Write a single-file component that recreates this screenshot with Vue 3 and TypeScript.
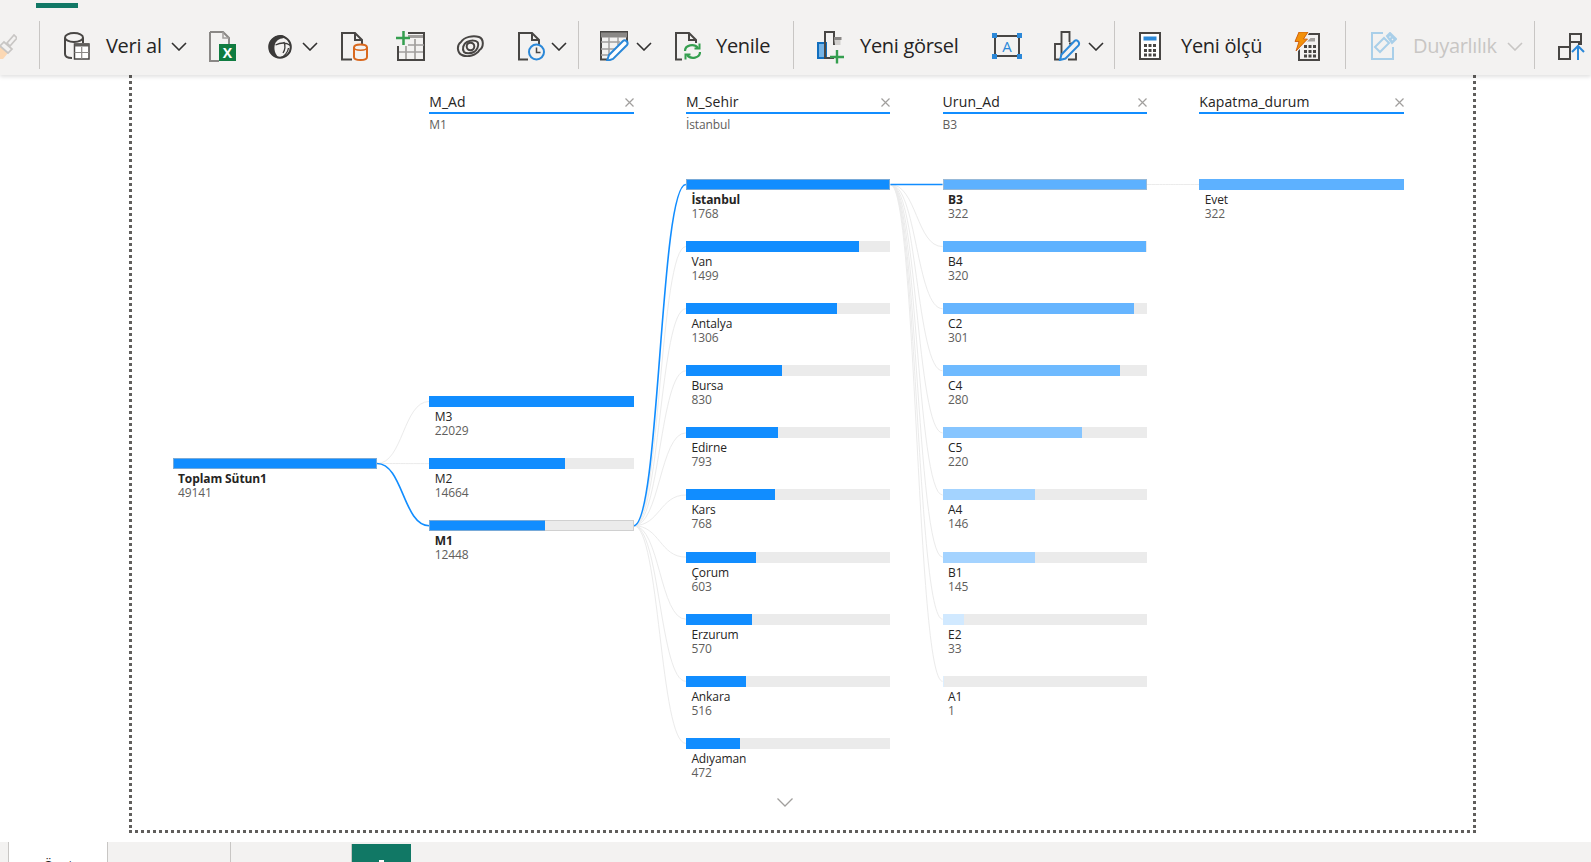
<script setup lang="ts">
interface Item { label: string; value: number }
interface Col { title: string; sub: string; offset: number; tinted: boolean; sel: string; items: Item[] }

const cols: Col[] = [
  { title: '', sub: '', offset: 279, tinted: false, sel: 'Toplam Sütun1', items: [{ label: 'Toplam Sütun1', value: 49141 }] },
  { title: 'M_Ad', sub: 'M1', offset: 217, tinted: false, sel: 'M1', items: [
    { label: 'M3', value: 22029 }, { label: 'M2', value: 14664 }, { label: 'M1', value: 12448 } ] },
  { title: 'M_Sehir', sub: 'İstanbul', offset: 0, tinted: false, sel: 'İstanbul', items: [
    { label: 'İstanbul', value: 1768 }, { label: 'Van', value: 1499 }, { label: 'Antalya', value: 1306 },
    { label: 'Bursa', value: 830 }, { label: 'Edirne', value: 793 }, { label: 'Kars', value: 768 },
    { label: 'Çorum', value: 603 }, { label: 'Erzurum', value: 570 }, { label: 'Ankara', value: 516 },
    { label: 'Adıyaman', value: 472 } ] },
  { title: 'Urun_Ad', sub: 'B3', offset: 0, tinted: true, sel: 'B3', items: [
    { label: 'B3', value: 322 }, { label: 'B4', value: 320 }, { label: 'C2', value: 301 },
    { label: 'C4', value: 280 }, { label: 'C5', value: 220 }, { label: 'A4', value: 146 },
    { label: 'B1', value: 145 }, { label: 'E2', value: 33 }, { label: 'A1', value: 1 } ] },
  { title: 'Kapatma_durum', sub: '', offset: 0, tinted: true, sel: '', items: [{ label: 'Evet', value: 322 }] },
]

const COL_W = 204.5
const COL_GAP = 52.2
const ROW_H = 62.1
const HEAD_H = 104
const PAD_L = 43.5

function maxOf(c: Col): number {
  return Math.max(...c.items.map((i) => i.value))
}
function fillStyle(c: Col, it: Item) {
  const r = it.value / maxOf(c)
  const a = c.tinted ? 0.14 + 0.54 * r : 1
  const red = Math.round(255 - 238 * a)
  const green = Math.round(255 - 114 * a)
  return { width: `${r * 100}%`, background: `rgb(${red},${green},255)` }
}
function barY(ci: number, k: number): number {
  return HEAD_H + cols[ci].offset + ROW_H * k + 5.5
}
function link(ci: number, a: number, b: number): string {
  const x0 = PAD_L + ci * (COL_W + COL_GAP) + COL_W
  const x1 = x0 + COL_GAP
  const xm = (x0 + x1) / 2
  const y0 = barY(ci, a)
  const y1 = barY(ci + 1, b)
  return `M${x0} ${y0}C${xm} ${y0} ${xm} ${y1} ${x1} ${y1}`
}
const grey: string[] = []
const blue: string[] = []
cols.forEach((c, ci) => {
  if (ci === cols.length - 1) return
  const from = c.items.findIndex((i) => i.label === c.sel)
  cols[ci + 1].items.forEach((it, k) => {
    if (it.label === cols[ci + 1].sel) blue.push(link(ci, from, k))
    else grey.push(link(ci, from, k))
  })
})
</script>

<template>
  <div class="page">
    <header class="ribbon">
      <div class="tabline"><span class="tabmark"></span></div>
      <div class="tools">
        <svg class="ic brush" width="17" height="25" viewBox="0 0 17 25"><path d="M-6 19l6-7 8 7-5 6H-6z" fill="#fbd8b4"/><path d="M0 12l4-4 8 7-4 4zM7 9l7-8 3 3-7 8z" fill="#f3f2f1" stroke="#c8c6c4" stroke-width="1.700"/></svg>
        <span class="sep s1"></span>
        <svg class="ic m24" width="26" height="28" viewBox="0 0 26 28" fill="none" stroke="#484644" stroke-width="2"><ellipse cx="10" cy="5.5" rx="9" ry="4.5"/><path d="M1 6v16c0 2.500 2.500 4 7 4M19 6v5"/><rect x="10.500" y="12" width="14.500" height="15" fill="#fff" stroke-width="1.500"/><path d="M10.500 13h14.500" stroke="#605e5c" stroke-width="3"/><path d="M17.700 15v12M10.500 20.500h14.500" stroke="#8a8886" stroke-width="1.200"/></svg>
        <span class="txt t-veri">Veri al</span>
        <svg class="chev c10" width="16" height="9" viewBox="0 0 16 9"><path d="M1 1l7 7 7-7" fill="none" stroke="#323130" stroke-width="1.600"/></svg>
        <svg class="ic m23" width="27" height="31" viewBox="0 0 27 31"><path d="M1 1h13l6 6v6M1 1v29h9" fill="none" stroke="#8a8886" stroke-width="2"/><path d="M14 1v6h6" fill="none" stroke="#a19f9d" stroke-width="1.500"/><rect x="10" y="13" width="17" height="17" fill="#107c41"/><text x="18.500" y="27" text-anchor="middle" class="xl">X</text></svg>
        <svg class="ic m23b" width="24" height="25" viewBox="0 0 24 25" fill="none"><circle cx="12" cy="13" r="10.800" stroke="#3b3a39" stroke-width="2"/><path d="M1.500 13C1.500 6 6 2 12 1c3-.5 5 1 5.500 3-5 0-9 2-10.500 6-1.500 5 0 10 4 14C5 23 1.500 19 1.500 13z" fill="#3b3a39"/><path d="M7.500 11c5-2.500 11-2.500 15 .5M13 23.500c3-1 7-5 7.500-9.500M16 8c1.500 4 1 8-1 11" stroke="#3b3a39" stroke-width="1.300"/></svg>
        <svg class="chev c10" width="16" height="9" viewBox="0 0 16 9"><path d="M1 1l7 7 7-7" fill="none" stroke="#323130" stroke-width="1.600"/></svg>
        <svg class="ic m24" width="27" height="29" viewBox="0 0 27 29" fill="none"><path d="M11 27.500H1V1h13l7 7v5M14 1v7h7" stroke="#484644" stroke-width="2"/><path d="M13 15.500c0-4 13-4 13 0v9.500c0 4-13 4-13 0z" stroke="#d9681d" stroke-width="2" fill="#f3f2f1"/><path d="M13 15.500c0 3.500 13 3.500 13 0" stroke="#d9681d" stroke-width="1.500"/></svg>
        <svg class="ic m28" width="29" height="30" viewBox="0 0 29 30" fill="none"><path d="M12 2h16v27H2V15" stroke="#484644" stroke-width="2"/><path d="M12 5.500h15" stroke="#a19f9d" stroke-width="3"/><path d="M3 21h24M10 15v13M19 8v20M12 14h16" stroke="#a19f9d" stroke-width="1.700"/><path d="M7.500 0v14M0 7h14" stroke="#359f4f" stroke-width="2.500"/></svg>
        <svg class="ic m31" width="28" height="22" viewBox="0 0 28 22" fill="none" stroke="#484644" stroke-width="2"><path d="M6 20C1 18 .5 10 5 7c3-5 12-7 18-5 5 2 5 10 .5 13-3 5-12 8-17.500 5z"/><path d="M8 17c-2-3-1-8 3-10 4-2 10-2 11 1 1 3-1 7-4 9-3 1.500-8 2-10 0z"/><circle cx="14.500" cy="11.500" r="3.800"/></svg>
        <svg class="ic m34" width="27" height="29" viewBox="0 0 27 29" fill="none"><path d="M10 27.500H1V1h13l7 7v6M14 1v7h7" stroke="#484644" stroke-width="2"/><circle cx="18.500" cy="20" r="7.500" stroke="#2b88d8" stroke-width="2" fill="#f3f2f1"/><path d="M18.500 15.500V20.500H22.500" stroke="#484644" stroke-width="1.500"/></svg>
        <svg class="chev c6" width="16" height="9" viewBox="0 0 16 9"><path d="M1 1l7 7 7-7" fill="none" stroke="#323130" stroke-width="1.600"/></svg>
        <span class="sep s12"></span>
        <svg class="ic m21" width="29" height="30" viewBox="0 0 29 30" fill="none"><path d="M10 28.500H1V1h26v10" stroke="#484644" stroke-width="2"/><path d="M1 4h26" stroke="#8a8886" stroke-width="5"/><path d="M1 11h19M1 18h14M1 24h9M9 6v22M18 6v8" stroke="#a19f9d" stroke-width="1.500"/><path d="M9 24L23 10c2-2 6 1 4 4L13 28l-6 2z" fill="#fff" stroke="#2b88d8" stroke-width="2"/></svg>
        <svg class="chev c7" width="16" height="9" viewBox="0 0 16 9"><path d="M1 1l7 7 7-7" fill="none" stroke="#323130" stroke-width="1.600"/></svg>
        <svg class="ic m24" width="26" height="29" viewBox="0 0 26 29" fill="none"><path d="M7 27.500H1V1h13l7 7v3M14 1v7h7" stroke="#484644" stroke-width="2"/><path d="M10 19c0-6 9-8 13-3M25 20c0 6-9 8-13 3" stroke="#359f4f" stroke-width="2.200"/><path d="M19.500 16.500h5v-5M15.500 22.500h-5v5" stroke="#359f4f" stroke-width="2"/></svg>
        <span class="txt t-yenile">Yenile</span>
        <span class="sep s24"></span>
        <svg class="ic m23 lowered" width="28" height="33" viewBox="0 0 28 33" fill="none"><rect x="1" y="12" width="8" height="15" fill="#75b3e6" stroke="#106ebe" stroke-width="2"/><path d="M17 27H8V1h9v13" stroke="#484644" stroke-width="2"/><path d="M17 7h6.500v7H18z" fill="#d2d0ce"/><path d="M17 7.500h7.500" stroke="#8a8886" stroke-width="3"/><path d="M20 19v13.500M13 26h14" stroke="#359f4f" stroke-width="2.400"/></svg>
        <span class="txt t-gorsel">Yeni görsel</span>
        <svg class="ic m33" width="30" height="26" viewBox="0 0 30 26" fill="none"><rect x="3" y="3" width="24" height="20" stroke="#484644" stroke-width="2"/><path d="M0 0h5v5H0zM25 0h5v5h-5zM0 21h5v5H0zM25 21h5v5h-5z" fill="#2b88d8"/><text x="15" y="18.500" text-anchor="middle" class="boxa">A</text></svg>
        <svg class="ic m32" width="27" height="30" viewBox="0 0 27 30" fill="none"><path d="M6 28.500H1V13h6.500M7.500 14V1h8v10M15 12.500h7v1.500M14 28.500h8V22M7.500 13v13" stroke="#484644" stroke-width="1.900"/><path d="M6 29l1.500-5.500L20.500 10c2-2 6 1 4 4.500L11.500 27.500z" fill="#f3f2f1" stroke="#2b88d8" stroke-width="2"/></svg>
        <svg class="chev c7" width="16" height="9" viewBox="0 0 16 9"><path d="M1 1l7 7 7-7" fill="none" stroke="#323130" stroke-width="1.600"/></svg>
        <span class="sep s11"></span>
        <svg class="ic m24" width="22" height="28" viewBox="0 0 22 28"><rect x="1" y="1" width="20" height="26" fill="#fff" stroke="#484644" stroke-width="2"/><rect x="4.500" y="4.500" width="13" height="4" fill="#2b88d8"/><path d="M5 12h3v3H5zM9.500 12h3v3h-3zM14 12h3v3h-3zM5 17h3v3H5zM9.500 17h3v3h-3zM14 17h3v3h-3zM5 21.500h3v3H5zM9.500 21.500h3v3h-3zM14 21.500h3v3h-3z" fill="#484644"/></svg>
        <span class="txt t-olcu">Yeni ölçü</span>
        <svg class="ic m32" width="26" height="29" viewBox="0 0 26 29"><rect x="5" y="2" width="20" height="26" fill="#f3f2f1" stroke="#484644" stroke-width="2"/><rect x="12" y="6" width="9" height="3.500" fill="#a19f9d"/><path d="M10 13h3v3h-3zM14.500 13h3v3h-3zM19 13h3v3h-3zM10 18h3v3h-3zM14.500 18h3v3h-3zM19 18h3v3h-3zM10 22.500h3v3h-3zM14.500 22.500h3v3h-3zM19 22.500h3v3h-3z" fill="#484644"/><path d="M5 0h9L9.500 7H13.500L2 19l3-9.500H1z" fill="#f2910a" stroke="#f3f2f1" stroke-width="3" paint-order="stroke"/><path d="M5 0h9L9.500 7H13.500L2 19l3-9.500H1z" fill="#f2910a" stroke="#c8560c" stroke-width=".8"/></svg>
        <span class="sep s25"></span>
        <svg class="ic m25" width="26" height="28" viewBox="0 0 26 28" fill="none" stroke="#a9cfe9" stroke-width="2"><path d="M12 1H1v26h21V15"/><path d="M4 15l9-9 5 5-9 9z"/><path d="M16 4l3-3 6 6-4 4z" fill="#a9cfe9"/><path d="M19.500 4.500l-1 1M22 7l-1 1" stroke="#f3f2f1" stroke-width="1.200"/></svg>
        <span class="txt t-duy">Duyarlılık</span>
        <svg class="chev c10" width="16" height="9" viewBox="0 0 16 9"><path d="M1 1l7 7 7-7" fill="none" stroke="#c8c6c4" stroke-width="1.600"/></svg>
        <span class="sep s12"></span>
        <svg class="ic m23" width="28" height="28" viewBox="0 0 28 28" fill="none"><path d="M1 15h11v12H1zM12 18v-8h9v3" stroke="#484644" stroke-width="2"/><path d="M12 10V2h11v11" stroke="#484644" stroke-width="2"/><path d="M20 28V14M14 20l6-6 6 6" stroke="#2b88d8" stroke-width="2"/></svg>
      </div>
    </header>

    <main class="canvas">
      <section class="frame">
        <svg class="links" width="1347" height="758" viewBox="0 0 1347 758" fill="none">
          <path v-for="d in grey" :key="d" :d="d" class="ln-grey" />
          <path v-for="d in blue" :key="d" :d="d" class="ln-blue" />
        </svg>
        <div class="tree">
          <div v-for="(c, ci) in cols" :key="ci" class="col">
            <div class="col-head">
              <template v-if="c.title">
                <div class="title">
                  <span>{{ c.title }}</span>
                  <svg width="9" height="9" viewBox="0 0 9 9"><path d="M.5.500l8 8M8.500.500l-8 8" stroke="#a19f9d" stroke-width="1.200"/></svg>
                </div>
                <div class="sub">{{ c.sub }}</div>
              </template>
            </div>
            <div class="nodes" :style="{ paddingTop: c.offset + 'px' }">
              <div v-for="it in c.items" :key="it.label" class="node" :class="{ selected: it.label === c.sel }">
                <div class="track"><div class="fill" :style="fillStyle(c, it)"></div></div>
                <div class="lab">{{ it.label }}</div>
                <div class="val">{{ it.value }}</div>
              </div>
            </div>
            <svg v-if="ci === 2" class="more" width="16" height="9" viewBox="0 0 16 9"><path d="M.5.500L8 8 15.500.500" fill="none" stroke="#a19f9d" stroke-width="1.300"/></svg>
          </div>
        </div>
      </section>
    </main>

    <footer class="tabs">
      <div class="tab t-active"><span class="tab-name">Özet</span></div>
      <div class="tab t-b"></div>
      <div class="tab t-c"></div>
      <div class="tab-add"><span class="add-mark"></span></div>
    </footer>
  </div>
</template>

<style>
html, body { margin: 0; padding: 0; overflow: hidden; background: #fff; }
</style>

<style scoped>
.page { width: 1591px; height: 862px; display: flex; flex-direction: column; overflow: hidden; font-family: "Open Sans", "Noto Sans", sans-serif; color: #252423; }
.ribbon { height: 75px; flex: none; background: #f3f2f1; box-shadow: 0 2px 4px rgba(0,0,0,.12); position: relative; z-index: 2; }
.tabline { height: 8px; padding-left: 36px; box-sizing: border-box; padding-top: 3px; }
.tabmark { display: block; width: 42px; height: 5px; background: #117865; }
.tools { height: 67px; box-sizing: border-box; padding-top: 9px; display: flex; align-items: center; white-space: nowrap; }
.ic, .chev { flex: none; display: block; }
.chev { margin-right: -1px; }
.lowered { margin-top: 3px; }
.sep { flex: none; width: 1px; height: 48px; background: #c8c6c4; margin-top: -2px; }
.s1 { margin-left: 22px; }
.s11 { margin-left: 11px; }
.s12 { margin-left: 12px; }
.s24 { margin-left: 24px; }
.s25 { margin-left: 25px; }
.m21 { margin-left: 21px; }
.m23 { margin-left: 23px; }
.m23b { margin-left: 32px; }
.m24 { margin-left: 24px; }
.m25 { margin-left: 25px; }
.m28 { margin-left: 28px; }
.m31 { margin-left: 31px; }
.m32 { margin-left: 32px; }
.m33 { margin-left: 33px; }
.m34 { margin-left: 34px; }
.c6 { margin-left: 6px; }
.c7 { margin-left: 7px; }
.c10 { margin-left: 10px; }
.txt { flex: none; font-size: 20px; line-height: 26px; color: #252423; letter-spacing: -.3px; }
.t-veri { margin-left: 16px; width: 55px; }
.t-yenile { margin-left: 15px; width: 53px; }
.t-gorsel { margin-left: 15px; width: 99px; }
.t-olcu { margin-left: 20px; width: 81px; }
.t-duy { margin-left: 16px; width: 84px; color: #c8c6c4; }
.xl { font: 700 14px "Open Sans", sans-serif; fill: #fff; }
.boxa { font: 400 15px "Open Sans", sans-serif; fill: #2b88d8; }

.canvas { flex: 1; min-height: 0; background: #fff; }
.frame { position: relative; width: 1347px; height: 758px; margin-left: 129px; box-sizing: border-box; padding-left: 43.5px;
  background-image:
    repeating-linear-gradient(90deg, #605e5c 0 3px, transparent 3px 6px),
    repeating-linear-gradient(180deg, #605e5c 0 3px, transparent 3px 6px),
    repeating-linear-gradient(180deg, #605e5c 0 3px, transparent 3px 6px);
  background-size: 100% 3px, 3px 100%, 3px 100%;
  background-position: left bottom, left top, right top;
  background-repeat: no-repeat; }
.links { position: absolute; left: 0; top: 0; }
.ln-grey { stroke: #ebebeb; stroke-width: 1; }
.ln-blue { stroke: #118dff; stroke-width: 1.6; }
.tree { position: relative; display: grid; grid-template-columns: repeat(5, 204.5px); column-gap: 52.2px; }
.col { display: flex; flex-direction: column; }
.col-head { height: 104px; box-sizing: border-box; padding-top: 17px; }
.title { display: flex; justify-content: space-between; align-items: center; height: 22px; box-sizing: border-box; border-bottom: 2px solid #118dff; font-size: 14px; line-height: 20px; letter-spacing: .1px; color: #252423; }
.sub { margin-top: 3.5px; font-size: 12px; line-height: 14px; letter-spacing: -.1px; color: #605e5c; }
.node { height: 62.1px; box-sizing: border-box; }
.track { height: 11px; background: #ebebeb; }
.fill { height: 100%; }
.selected .track { outline: 1px solid rgba(190,190,190,.6); outline-offset: -1px; }
.lab { margin-top: 3px; padding-left: 5.5px; font-size: 12px; line-height: 14px; letter-spacing: -.1px; color: #252423; }
.selected .lab { font-weight: 700; }
.val { padding-left: 5.5px; font-size: 12px; line-height: 14px; letter-spacing: -.1px; color: #605e5c; }
.more { align-self: center; margin-top: -2px; margin-right: 6px; }

.tabs { height: 20px; flex: none; background: #f3f2f1; display: flex; overflow: hidden; }
.tab { height: 20px; box-sizing: border-box; border-left: 1px solid #c8c6c4; }
.t-active { margin-left: 8px; width: 99px; background: #fff; padding: 14px 0 0 34px; }
.tab-name { display: block; font-size: 14px; line-height: 20px; color: #252423; }
.t-b { width: 123px; }
.t-c { width: 121px; }
.tab-add { width: 60px; height: 18px; margin-top: 2px; background: #117865; border-left: 1px solid #c8c6c4; box-sizing: border-box; position: relative; }
.add-mark { position: absolute; left: 27px; bottom: 0; width: 5px; height: 2px; background: #fff; }
</style>
